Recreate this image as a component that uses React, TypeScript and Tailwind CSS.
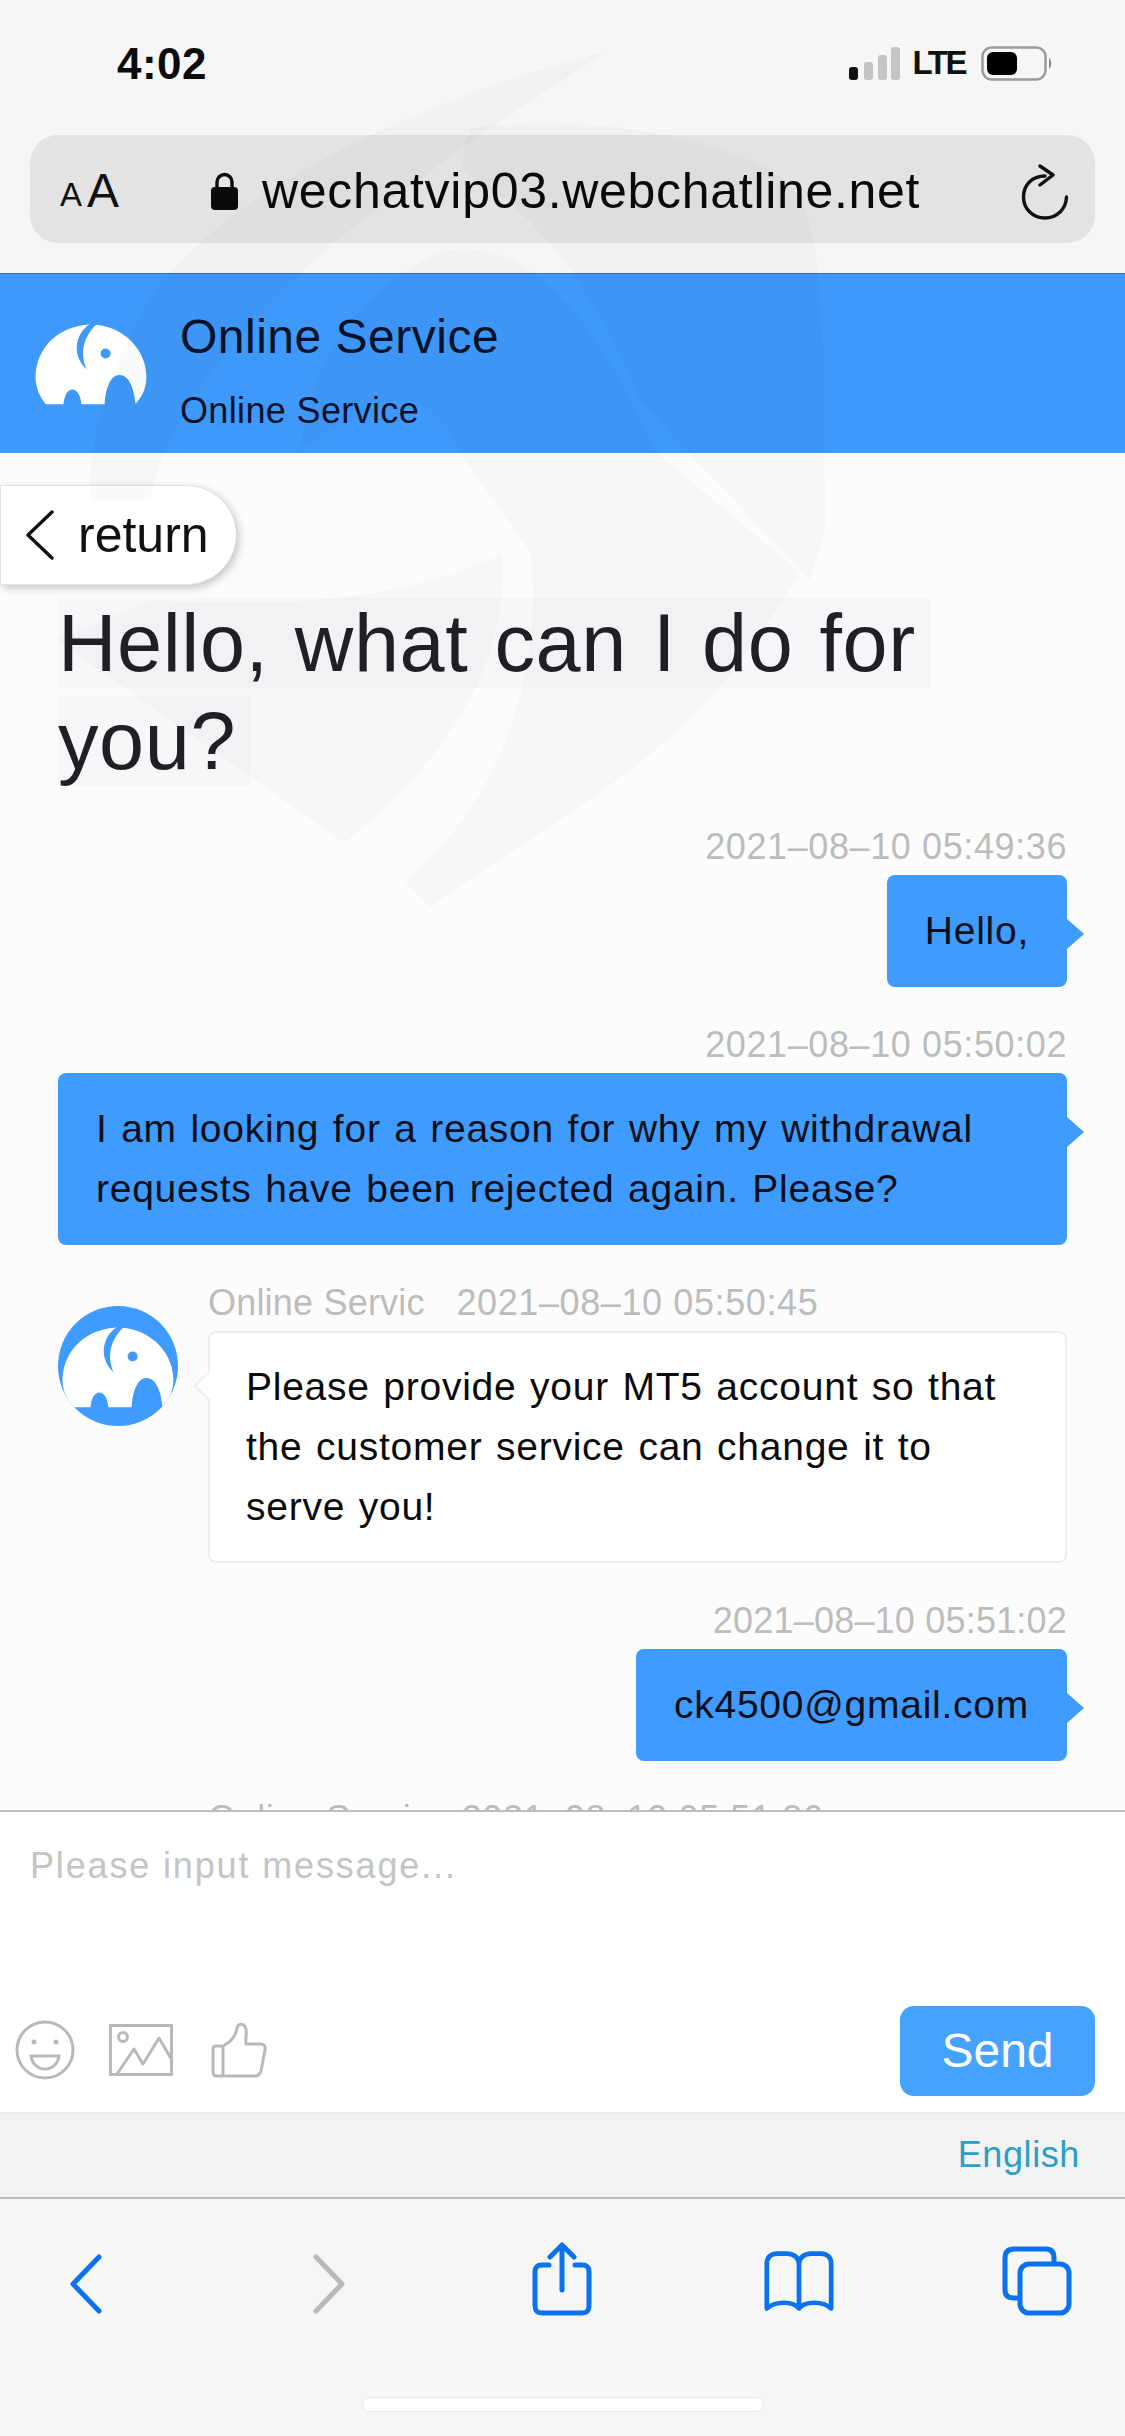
const BLUE = "#3f9bfd";

function Elephant({ cut }: { cut: string }) {
  return (
    <svg viewBox="40 65 345 250" className="block h-[83px] w-[115px]">
      <path
        fill="#fff"
        d="M75 310C50 280 40 240 45 210C55 130 120 75 200 70C290 65 375 130 378 225C378 260 365 290 345 308C340 260 325 222 297 222C270 222 255 260 252 310H182C180 285 170 265 155 265C140 265 130 285 128 310Z"
      />
      <path fill={cut} d="M208 68C165 95 150 160 198 205C178 160 185 110 228 68Z" />
      <circle cx="255" cy="157" r="15" fill={cut} />
    </svg>
  );
}

function Watermark() {
  return (
    <svg viewBox="0 0 1125 1000" className="pointer-events-none absolute top-0 left-0 h-[1000px] w-[1125px]">
      <g fill="#20242c" fillOpacity="0.024">
        <path d="M606 52C470 85 250 170 160 285C120 345 90 410 90 500H150C170 400 280 270 420 180C470 140 540 95 606 52Z" />
        <path d="M470 128C600 112 740 140 790 185C815 215 825 250 825 530L810 580L688 452L640 400C600 300 540 210 460 170Z" />
        <path d="M300 452C310 350 380 270 450 250C520 240 590 300 656 452H459C440 400 400 370 300 452Z" />
        <path d="M459 452H656L800 572C770 620 745 660 717 690C650 770 540 830 430 907L405 883C520 780 540 650 531 553Z" />
        <path d="M57 640L344 843C450 760 510 660 502 553C420 590 340 610 150 600Z" />
      </g>
    </svg>
  );
}

function Timestamp({ children, tight }: { children: string; tight?: boolean }) {
  return (
    <div className={tight ? "h-[40px] text-right text-[36px] leading-[40px] tracking-[0.2px] text-[#bcbcbc]" : "h-[40px] text-right text-[36px] leading-[40px] tracking-[0.6px] text-[#bcbcbc]"}>
      {children}
    </div>
  );
}

function Sent({ time, text, tight }: { time: string; text: string; tight?: boolean }) {
  return (
    <div className="mb-[38px]">
      <Timestamp tight={tight}>{time}</Timestamp>
      <div className="mt-[8px] flex justify-end">
        <div className="relative rounded-[8px] bg-[#3f9bfd] px-[38px] py-[26px] text-[39px] leading-[60px] tracking-[0.75px] [word-spacing:2px] text-[#0a0f1a]">
          {text}
          <span className="absolute top-[44px] right-[-17px] border-y-[15px] border-l-[17px] border-y-transparent border-l-[#3f9bfd]" />
        </div>
      </div>
    </div>
  );
}

function Received({ name, time, text }: { name: string; time: string; text: string }) {
  return (
    <div className="mb-[38px] flex">
      <div className="mt-[23px] h-[120px] w-[120px] shrink-0 overflow-hidden rounded-full bg-[#3f9bfd] pt-[20px] pl-[3px]">
        <Elephant cut={BLUE} />
      </div>
      <div className="ml-[30px] min-w-0 flex-1">
        <div className="h-[40px] text-[36px] leading-[40px] tracking-[0.6px] whitespace-pre text-[#bcbcbc]">
          <span className="tracking-[0.2px]">{name}</span>
          {"   "}
          {time}
        </div>
        <div className="relative mt-[8px] rounded-[8px] border-2 border-[#eeeeee] bg-white px-[36px] py-[24px] text-[39px] leading-[60px] tracking-[0.75px] [word-spacing:2px] text-[#0a0a0a]">
          {text}
          <span className="absolute top-[42px] left-[-12px] h-[22px] w-[22px] rotate-45 border-b-2 border-l-2 border-[#eeeeee] bg-white" />
        </div>
      </div>
    </div>
  );
}

export default function App() {
  return (
    <div className="relative flex h-[2436px] w-[1125px] flex-col overflow-hidden bg-[#f6f6f6] font-['Liberation_Sans',sans-serif]">
      {/* safari top */}
      <div className="h-[273px] shrink-0">
        <div className="flex h-[135px] items-start justify-between pt-[42px] pr-[72px] pl-[117px]">
          <span className="text-[44px] leading-[44px] font-bold tracking-[0.5px] text-[#0b0b0b]">4:02</span>
          <div className="flex items-center pt-[3px]">
            <svg viewBox="0 0 52 33" className="h-[33px] w-[52px]">
              <rect x="0" y="20" width="9" height="13" rx="3" fill="#111" />
              <rect x="15" y="15" width="9" height="18" rx="3" fill="#c4c4c4" />
              <rect x="29" y="8" width="9" height="25" rx="3" fill="#c4c4c4" />
              <rect x="42" y="0" width="9" height="33" rx="3" fill="#c4c4c4" />
            </svg>
            <span className="ml-[12px] text-[33px] leading-[36px] font-bold tracking-[-2.5px] text-[#111]">LTE</span>
            <svg viewBox="0 0 72 35" className="ml-[16px] h-[35px] w-[72px]">
              <rect x="1.5" y="1.5" width="63" height="32" rx="9" fill="none" stroke="#9a9a9a" strokeWidth="2.5" />
              <rect x="6" y="6" width="30" height="23" rx="6" fill="#000" />
              <path d="M68 12C71 14 71 21 68 23Z" fill="#8c8c8c" />
            </svg>
          </div>
        </div>
        <div className="mx-[30px] flex h-[108px] items-center rounded-[28px] bg-[#e3e3e3] pt-[4px]">
          <span className="ml-[30px] w-[27px] pt-[8px] text-[33px] leading-[40px] text-[#111]">A</span>
          <span className="w-[36px] text-[48px] leading-[56px] text-[#111]">A</span>
          <svg viewBox="0 0 27 38" className="ml-[88px] h-[38px] w-[27px]">
            <path d="M6 17V10a7.5 7.5 0 0 1 15 0v7" fill="none" stroke="#0a0a0a" strokeWidth="3.4" />
            <rect x="0" y="15" width="27" height="23" rx="4" fill="#0a0a0a" />
          </svg>
          <span className="ml-[24px] text-[50px] leading-[60px] tracking-[0.7px] text-[#0a0a0a]">wechatvip03.webchatline.net</span>
          <svg viewBox="0 0 48 56" className="mt-[2px] ml-auto mr-[26px] h-[56px] w-[48px]" fill="none" stroke="#111" strokeWidth="3.4" strokeLinecap="round" strokeLinejoin="round">
            <path d="M24 12C11 12 2.500 21 2.500 33S12 54 24 54 45 45 45.500 33" />
            <path d="M19 2L32 11 19 21" />
          </svg>
        </div>
      </div>

      {/* page header */}
      <div className="flex h-[180px] shrink-0 border-t border-[#2f6fb8] bg-[#3e99fb]">
        <div className="mt-[49px] ml-[34px]">
          <Elephant cut="#3e99fb" />
        </div>
        <div className="ml-[31px] pt-[34px]">
          <div className="text-[48px] leading-[58px] tracking-[0.5px] text-[#06122a]">Online Service</div>
          <div className="mt-[23px] text-[36px] leading-[44px] tracking-[0.35px] text-[#06122a]">Online Service</div>
        </div>
      </div>

      {/* chat */}
      <div className="relative h-[1357px] shrink-0 overflow-hidden bg-[#fcfcfc] px-[58px] pt-[141px]">
        <div className="absolute top-[32px] left-0 flex h-[100px] w-[236px] items-center rounded-r-[50px] border-y border-l border-[#e4e4e4] bg-white pl-[24px] shadow-[3px_3px_8px_rgba(0,0,0,0.22)]">
          <svg viewBox="0 0 30 50" className="h-[50px] w-[30px]" fill="none" stroke="#111" strokeWidth="3.4" strokeLinecap="round" strokeLinejoin="round">
            <path d="M27 2L3 25 27 48" />
          </svg>
          <span className="ml-[23px] text-[50px] leading-[56px] text-[#111]">return</span>
        </div>
        <h1 className="mb-[37px] text-[81px] leading-[98px] font-normal tracking-[0.6px] [word-spacing:3px] text-[#1f1f24]">
          <span className="bg-[#f7f7f9] pr-[15px] box-decoration-clone">Hello, what can I do for you?</span>
        </h1>
        <Sent time="2021–08–10 05:49:36" text="Hello," />
        <div className="mb-[38px]">
          <Timestamp>2021–08–10 05:50:02</Timestamp>
          <div className="relative mt-[8px] rounded-[8px] bg-[#3f9bfd] px-[38px] py-[26px] text-[39px] leading-[60px] tracking-[0.75px] [word-spacing:2px] text-[#0a0f1a]">
            I am looking for a reason for why my withdrawal requests have been rejected again. Please?
            <span className="absolute top-[44px] right-[-17px] border-y-[15px] border-l-[17px] border-y-transparent border-l-[#3f9bfd]" />
          </div>
        </div>
        <Received
          name="Online Servic"
          time="2021–08–10 05:50:45"
          text="Please provide your MT5 account so that the customer service can change it to serve you!"
        />
        <Sent time="2021–08–10 05:51:02" text="ck4500@gmail.com" tight />
        <div className="ml-[150px] h-[40px] text-[36px] leading-[40px] tracking-[0.6px] whitespace-pre text-[#bcbcbc]">
          {"Online Servic   2021–08–10 05:51:36"}
        </div>
      </div>

      {/* input */}
      <div className="h-[302px] shrink-0 border-t-2 border-[#bdbdbd] bg-white">
        <div className="h-[195px] pt-[32px] pl-[30px] text-[36px] leading-[44px] tracking-[1.85px] text-[#c4c4c4]">Please input message...</div>
        <div className="flex items-start justify-between pr-[30px] pl-[15px]">
          <div className="mt-[13px] flex items-center">
            <svg viewBox="0 0 60 60" className="h-[60px] w-[60px]" fill="none" stroke="#b9b9b9" strokeWidth="3">
              <circle cx="30" cy="30" r="28" />
              <circle cx="19" cy="22" r="2.500" fill="#b9b9b9" stroke="none" />
              <circle cx="41" cy="22" r="2.500" fill="#b9b9b9" stroke="none" />
              <path d="M16 36H44C43 44 37 49 30 49S17 44 16 36Z" />
            </svg>
            <svg viewBox="0 0 64 52" className="ml-[34px] h-[52px] w-[64px]" fill="none" stroke="#b9b9b9" strokeWidth="3">
              <rect x="1.500" y="1.500" width="61" height="49" />
              <circle cx="14" cy="13" r="4.500" />
              <path d="M8 50L25 25 34 40 50 14 63 36" strokeLinejoin="round" />
            </svg>
            <svg viewBox="0 0 56 56" className="ml-[38px] h-[56px] w-[56px]" fill="none" stroke="#b9b9b9" strokeWidth="3" strokeLinejoin="round">
              <path d="M12 24H5C3 24 2 25 2 27V50C2 52 3 54 6 54H44C47 54 49 52 50 49L54 28C55 25 53 22 50 22H35C34 20 36 12 35 7 34 1 27 1 26 6 25 13 20 20 12 24V54" />
            </svg>
          </div>
          <div className="-mt-[1px] flex h-[90px] w-[195px] items-center justify-center rounded-[14px] bg-[#45a2fd] text-[48px] leading-[56px] text-white">Send</div>
        </div>
      </div>

      {/* language bar */}
      <div className="flex h-[87px] shrink-0 items-center justify-end border-t border-[#ececec] border-b-2 border-b-[#bdbdbd] bg-[#f2f2f2] pr-[45px] text-[36px] leading-[44px] tracking-[0.6px] text-[#2c9ec9]">
        English
      </div>

      {/* safari toolbar */}
      <div className="flex-1">
        <div className="flex items-start pt-[43px] pl-[70px]">
          <svg viewBox="0 0 32 60" className="mt-[12px] h-[60px] w-[32px]" fill="none" stroke="#0a72ee" strokeWidth="5" strokeLinecap="round" strokeLinejoin="round">
            <path d="M29 3L3 30 29 57" />
          </svg>
          <svg viewBox="0 0 32 60" className="mt-[12px] ml-[211px] h-[60px] w-[32px]" fill="none" stroke="#b9b9b9" strokeWidth="5" strokeLinecap="round" strokeLinejoin="round">
            <path d="M3 3L29 30 3 57" />
          </svg>
          <svg viewBox="0 0 60 74" className="ml-[187px] h-[74px] w-[60px]" fill="none" stroke="#0a72ee" strokeWidth="5" strokeLinecap="round" strokeLinejoin="round">
            <path d="M17 23H10C5 23 3 25 3 30V63C3 69 5 71 10 71H50C55 71 57 69 57 63V30C57 25 55 23 50 23H43" />
            <path d="M30 48V3M18 15L30 3 42 15" />
          </svg>
          <svg viewBox="0 0 74 64" className="mt-[8px] ml-[172px] h-[62px] w-[70px]" fill="none" stroke="#0a72ee" strokeWidth="5" strokeLinecap="round" strokeLinejoin="round">
            <path d="M37 14V61C31 53 12 53 3 61V14C3 8 6 3 14 3H24C32 3 37 8 37 14ZM37 14C37 8 42 3 50 3H60C68 3 71 8 71 14V61C62 53 43 53 37 61" />
          </svg>
          <svg viewBox="0 0 70 70" className="mt-[4px] ml-[168px] h-[70px] w-[70px]" fill="none" stroke="#0a72ee" strokeWidth="5" strokeLinejoin="round">
            <path d="M52 18V12C52 6 49 3 44 3H12C6 3 3 6 3 12V44C3 49 6 52 12 52H18" />
            <rect x="18" y="18" width="49" height="49" rx="9" />
          </svg>
        </div>
        <div className="mx-auto mt-[81px] h-[15px] w-[402px] rounded-full border border-[#e8e8e8] bg-white" />
      </div>
      <Watermark />
    </div>
  );
}
